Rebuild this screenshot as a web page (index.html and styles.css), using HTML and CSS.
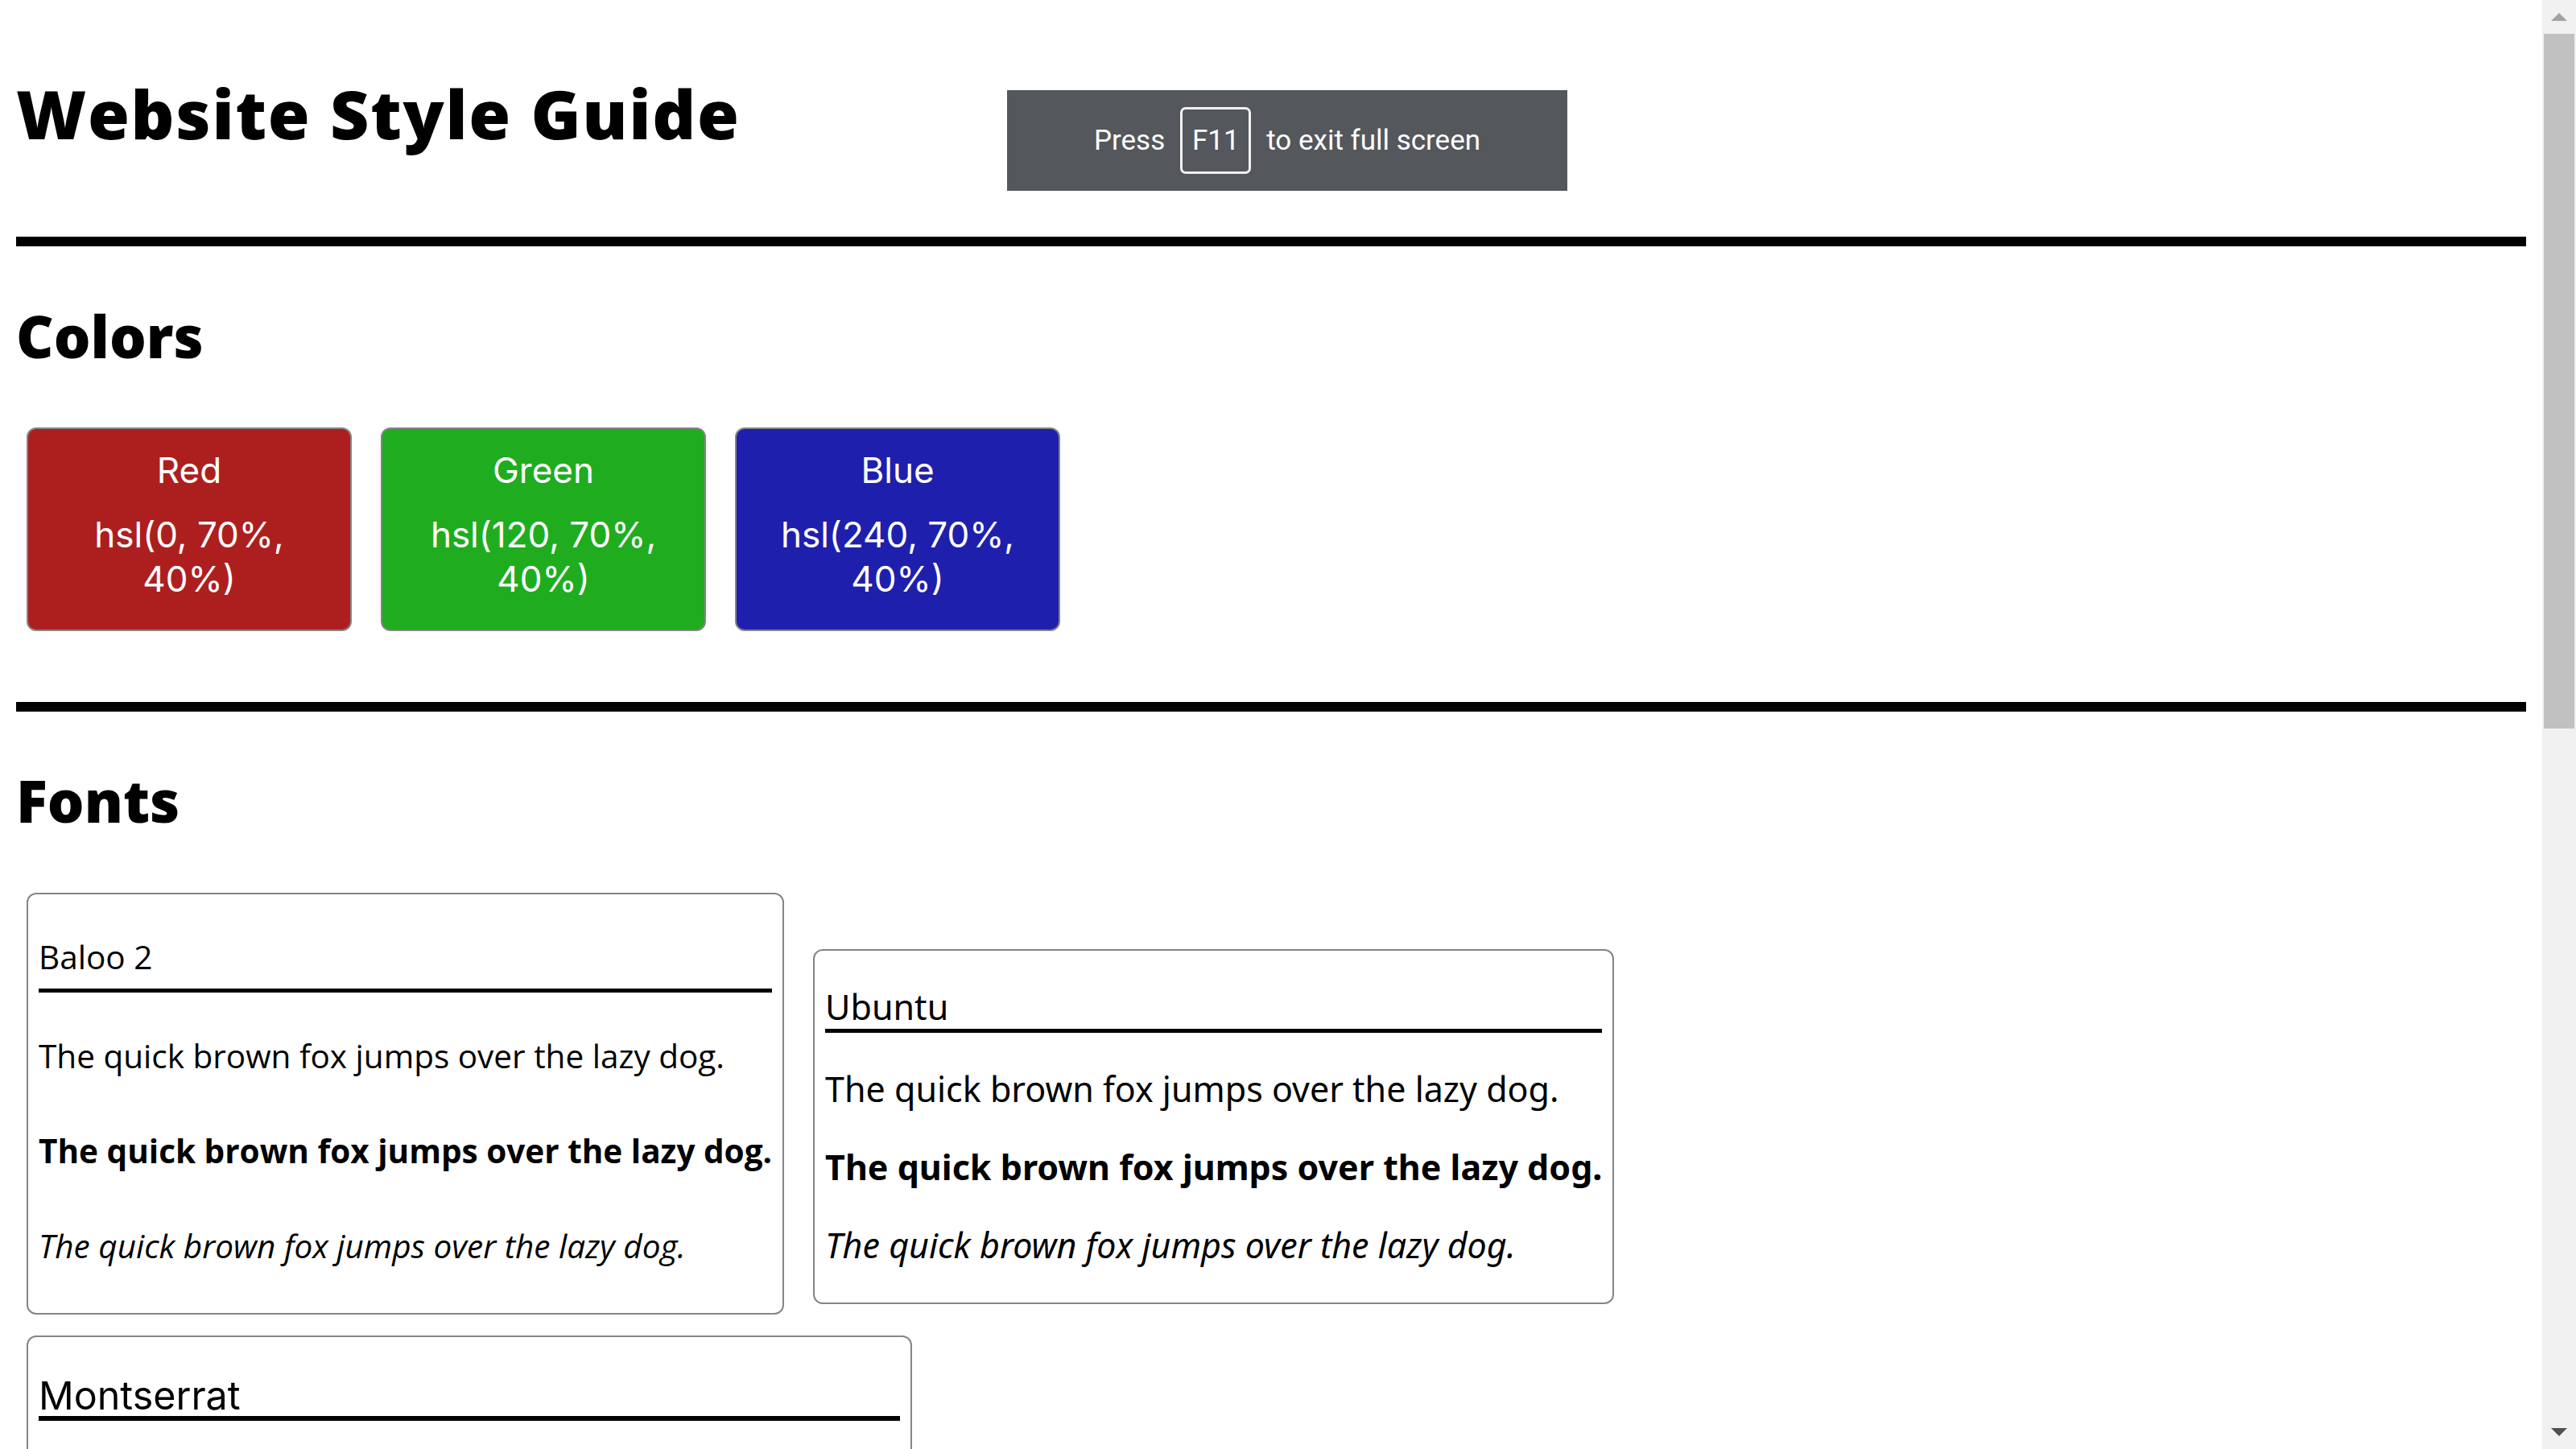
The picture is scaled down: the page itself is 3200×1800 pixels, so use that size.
FILE: index.html
```html
<!DOCTYPE html>
<html lang="en">
<head>
<meta charset="utf-8">
<title>Website Style Guide</title>
<link rel="stylesheet" href="styles.css">
</head>
<body>
<main class="page">
  <h1 class="title">Website Style Guide</h1>
  <hr class="rule rule-top">

  <section class="section">
    <h2 class="section-title section-title-colors">Colors</h2>
    <div class="swatches">
      <div class="swatch swatch-red">
        <p class="swatch-name">Red</p>
        <p class="swatch-value">hsl(0, 70%, 40%)</p>
      </div>
      <div class="swatch swatch-green">
        <p class="swatch-name">Green</p>
        <p class="swatch-value">hsl(120, 70%, 40%)</p>
      </div>
      <div class="swatch swatch-blue">
        <p class="swatch-name">Blue</p>
        <p class="swatch-value">hsl(240, 70%, 40%)</p>
      </div>
    </div>
  </section>

  <hr class="rule rule-mid">

  <section class="section">
    <h2 class="section-title section-title-fonts">Fonts</h2>
    <div class="font-row font-row-first">
      <div class="font-card font-baloo">
        <h3 class="font-name">Baloo 2</h3>
        <p class="sample sample-regular">The quick brown fox jumps over the lazy dog.</p>
        <p class="sample sample-bold">The quick brown fox jumps over the lazy dog.</p>
        <p class="sample sample-italic">The quick brown fox jumps over the lazy dog.</p>
      </div>
      <div class="font-card font-ubuntu">
        <h3 class="font-name">Ubuntu</h3>
        <p class="sample sample-regular">The quick brown fox jumps over the lazy dog.</p>
        <p class="sample sample-bold">The quick brown fox jumps over the lazy dog.</p>
        <p class="sample sample-italic">The quick brown fox jumps over the lazy dog.</p>
      </div>
    </div>
    <div class="font-row font-row-second">
      <div class="font-card font-montserrat">
        <h3 class="font-name">Montserrat</h3>
        <p class="sample sample-regular">The quick brown fox jumps over the lazy dog.</p>
        <p class="sample sample-bold">The quick brown fox jumps over the lazy dog.</p>
        <p class="sample sample-italic">The quick brown fox jumps over the lazy dog.</p>
      </div>
    </div>
  </section>
</main>

<div class="fs-toast">
  <span class="fs-text">Press</span>
  <kbd class="fs-key">F11</kbd>
  <span class="fs-text">to exit full screen</span>
</div>

<div class="scrollbar" aria-hidden="true">
  <div class="sb-button"><span class="sb-arrow sb-arrow-up"></span></div>
  <div class="sb-thumb"></div>
  <div class="sb-spacer"></div>
  <div class="sb-button"><span class="sb-arrow sb-arrow-down"></span></div>
</div>
</body>
</html>
```

FILE: styles.css
```css
html {
  overflow: hidden;
  background: #fff;
}

body {
  margin: 0;
  padding: 0 62px 0 20px;
  color: #000;
  font-family: "Open Sans", "Noto Sans", sans-serif;
}

.page {
  display: block;
}

/* ---------- headings & rules ---------- */

.title {
  margin: 90px 0 0;
  font-family: "Open Sans", "Lato", sans-serif;
  font-weight: 800;
  font-size: 84px;
  line-height: 101px;
  letter-spacing: 1.7px;
}

.rule {
  border: 0;
  height: 12px;
  background: #000;
  margin: 0;
}

.rule-top {
  margin-top: 103px;
}

.rule-mid {
  margin-top: 88px;
}

.section-title {
  font-family: "Open Sans", "Lato", sans-serif;
  font-weight: 800;
  font-size: 72px;
  line-height: 86px;
  margin: 0;
}

.section-title-colors {
  margin-top: 68px;
}

.section-title-fonts {
  margin-top: 67px;
}

/* ---------- colour swatches ---------- */

.swatches {
  display: flex;
  gap: 36px;
  margin: 71px 0 0 13px;
}

.swatch {
  box-sizing: border-box;
  width: 404px;
  height: 253px;
  border: 2px solid #858585;
  border-radius: 12px;
  padding: 24px 24px 0;
  color: #fff;
  text-align: center;
  font-family: "Inter", "Noto Sans", sans-serif;
  font-size: 44px;
  line-height: 55px;
}

.swatch p {
  margin: 0;
}

.swatch .swatch-value {
  margin-top: 25px;
}

.swatch-red { background: hsl(0, 70%, 40%); }
.swatch-green { background: hsl(120, 70%, 40%); }
.swatch-blue { background: hsl(240, 70%, 40%); }

/* ---------- font cards ---------- */

.font-row {
  display: flex;
  align-items: flex-start;
  gap: 36px;
  margin-left: 13px;
}

.font-row-first {
  margin-top: 72px;
}

.font-row-second {
  margin-top: 26px;
}

.font-card {
  border: 2px solid #858585;
  border-radius: 12px;
  padding: 0 13px;
}

.font-name {
  margin: 0;
  font-weight: 400;
  font-size: inherit;
  border-bottom: 5px solid #000;
}

.sample {
  margin: 0;
  white-space: nowrap;
}

.sample-bold { font-weight: 700; }
.sample-italic { font-style: italic; }

/* Baloo 2 card */
.font-baloo {
  font-family: "Open Sans", "Noto Sans", sans-serif;
  font-size: 40.5px;
  line-height: 48px;
  padding-top: 53.5px;
  padding-bottom: 59.5px;
}

.font-baloo .font-name {
  padding-bottom: 15.5px;
}

.font-baloo .sample-regular { margin-top: 54.5px; }
.font-baloo .sample-bold,
.font-baloo .sample-italic { margin-top: 70px; }

/* Ubuntu card */
.font-ubuntu {
  margin-top: 70px;
  font-family: "Noto Sans", "Open Sans", sans-serif;
  font-size: 43px;
  line-height: 54px;
  padding-top: 42.5px;
  padding-bottom: 44.5px;
}

.font-ubuntu .font-name {
  padding-bottom: 0.5px;
}

.font-ubuntu .sample-regular { margin-top: 42.5px; }
.font-ubuntu .sample-bold,
.font-ubuntu .sample-italic { margin-top: 43px; }

/* Montserrat card */
.font-montserrat {
  font-family: "Inter", sans-serif;
  font-size: 48.4px;
  line-height: 50px;
  padding-top: 48px;
  padding-bottom: 40px;
}

.font-montserrat .font-name {
  border-bottom-width: 6px;
}

.font-montserrat .sample-regular { margin-top: 44px; }
.font-montserrat .sample-bold,
.font-montserrat .sample-italic { margin-top: 48px; }

/* ---------- full-screen toast (browser overlay) ---------- */

.fs-toast {
  position: fixed;
  left: 1251px;
  top: 112px;
  width: 696px;
  height: 125px;
  background: #54575c;
  color: #fff;
  display: flex;
  align-items: center;
  justify-content: center;
  gap: 19px;
  font-family: "Roboto", "Noto Sans", sans-serif;
  font-size: 35px;
}

.fs-key {
  box-sizing: border-box;
  display: flex;
  align-items: center;
  justify-content: center;
  width: 88px;
  height: 83px;
  border: 3px solid #f2f2f2;
  border-radius: 7px;
  font-family: inherit;
  font-size: inherit;
}

/* ---------- scrollbar ---------- */

.scrollbar {
  position: fixed;
  top: 0;
  right: 0;
  width: 42px;
  height: 100vh;
  background: #f1f1f1;
  display: flex;
  flex-direction: column;
}

.sb-button {
  height: 42px;
  display: flex;
  align-items: center;
  justify-content: center;
  flex: none;
}

.sb-thumb {
  height: 863px;
  margin: 0 2px;
  background: #c1c1c1;
  flex: none;
}

.sb-spacer {
  flex: 1;
}

.sb-arrow {
  width: 0;
  height: 0;
  border-left: 10px solid transparent;
  border-right: 10px solid transparent;
}

.sb-arrow-up {
  border-bottom: 10px solid #a3a3a3;
}

.sb-arrow-down {
  border-top: 10px solid #505050;
}
```
